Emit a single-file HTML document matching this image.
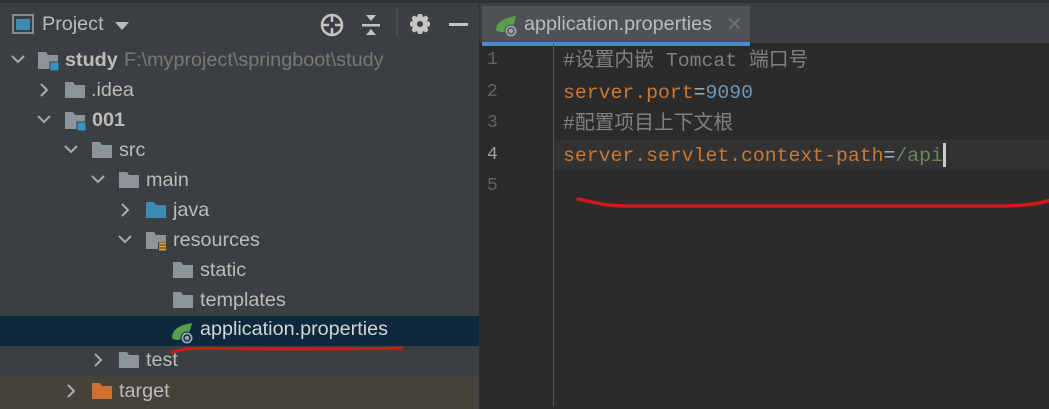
<!DOCTYPE html>
<html><head><meta charset="utf-8"><style>
*{margin:0;padding:0;box-sizing:border-box}
body{width:1049px;height:406px;overflow:hidden;background:#2b2b2b;font-family:"Liberation Sans","Noto Sans CJK SC",sans-serif;position:relative}
#left{position:absolute;left:0;top:0;width:479px;height:406px;background:#3c3f41;border-top:3px solid #2f3133}
.row{position:absolute;left:0;width:479px;height:30px;color:#bbbbbb;font-size:19.8px;line-height:30px;white-space:nowrap}
.row svg{position:absolute}
.t{position:absolute;top:0}
#right{position:absolute;left:479px;top:0;width:570px;height:406px;background:#2b2b2b}
#tabbar{position:absolute;left:0;top:0;width:570px;height:43px;background:#3c3f41;border-top:3px solid #2f3133;border-left:1px solid #323232}
#tab{position:absolute;left:2px;top:3px;width:268px;height:40px;background:#4e5254;border-bottom:4px solid #4a88c7}
.ln{position:absolute;left:8px;width:30px;text-align:left;font-family:"Liberation Mono",monospace;font-size:18px;color:#606366}
.code{position:absolute;left:84px;font-family:"Liberation Mono","Noto Sans CJK SC",monospace;font-size:19.8px;white-space:pre;line-height:30px}
.o{color:#cc7832}.b{color:#6897bb}.g{color:#808080}.gr{color:#6a8759}.w{color:#a9b7c6}
</style></head><body>
<div id="left">
 <div class="row" style="top:6px">
  <svg style="left:12px;top:5px" width="22" height="20"><rect x="1" y="1" width="20" height="18" fill="#3c3f41" stroke="#8a8d90" stroke-width="2"/><rect x="4" y="5" width="14" height="11" fill="#3d8bb0"/></svg>
  <span class="t" style="left:42px">Project</span>
  <svg style="left:114px;top:12px" width="16" height="10"><path d="M1 1 L15 1 L8 9Z" fill="#bbb"/></svg>
  <svg style="left:320px;top:4px" width="24" height="24" fill="none" stroke="#c4c4c4" stroke-width="2.5"><circle cx="12" cy="12" r="10"/><path d="M12 2v7M12 15v7M2 12h7M15 12h7"/></svg>
  <svg style="left:361px;top:5px" width="20" height="22" fill="#c4c4c4"><rect x="1" y="10" width="18" height="2.5"/><path d="M5 1h10l-5 6z M5 21h10l-5-6z"/></svg>
  <div style="position:absolute;left:396px;top:-2px;width:2px;height:30px;background:#4b4e50"></div>
  <svg style="left:409px;top:4px" width="22" height="22" fill="#c4c4c4"><path d="M9 1h4l1 3 3-1.5 2.5 2.5L18 8l3 1v4l-3 1 1.5 3-2.5 2.5L14 18l-1 3H9l-1-3-3 1.5L2.5 17 4 14l-3-1V9l3-1-1.5-3L5 2.5 8 4z"/><circle cx="11" cy="11" r="3" fill="#3c3f41"/></svg>
  <div style="position:absolute;left:449px;top:14px;width:19px;height:3px;background:#c4c4c4"></div>
 </div>
 <div class="row" style="top:42px">
  <svg style="left:11px;top:10px" width="14" height="10"><path d="M1 1l6 6 6-6" fill="none" stroke="#aaa" stroke-width="2"/></svg>
  <svg style="left:37px;top:5px" width="24" height="22"><path d="M1 2h8l2 3h10v14H1z" fill="#8c9399"/><rect x="13" y="12" width="9" height="9" fill="#3592c4" stroke="#3c3f41" stroke-width="1"/></svg>
  <span class="t" style="left:65px;font-weight:bold">study</span>
  <span class="t" style="left:124px;color:#787878">F:\myproject\springboot\study</span>
 </div>
 <div class="row" style="top:72px">
  <svg style="left:39px;top:8px" width="10" height="14"><path d="M2 1l6 6-6 6" fill="none" stroke="#aaa" stroke-width="2"/></svg>
  <svg style="left:64px;top:6px" width="22" height="18"><path d="M1 1h8l2 3h10v13H1z" fill="#8c9399"/></svg>
  <span class="t" style="left:91px">.idea</span>
 </div>
 <div class="row" style="top:102px">
  <svg style="left:37px;top:10px" width="14" height="10"><path d="M1 1l6 6 6-6" fill="none" stroke="#aaa" stroke-width="2"/></svg>
  <svg style="left:64px;top:5px" width="24" height="22"><path d="M1 2h8l2 3h10v14H1z" fill="#8c9399"/><rect x="13" y="12" width="9" height="9" fill="#3592c4" stroke="#3c3f41" stroke-width="1"/></svg>
  <span class="t" style="left:92px;font-weight:bold">001</span>
 </div>
 <div class="row" style="top:132px">
  <svg style="left:64px;top:10px" width="14" height="10"><path d="M1 1l6 6 6-6" fill="none" stroke="#aaa" stroke-width="2"/></svg>
  <svg style="left:91px;top:6px" width="22" height="18"><path d="M1 1h8l2 3h10v13H1z" fill="#8c9399"/></svg>
  <span class="t" style="left:119px">src</span>
 </div>
 <div class="row" style="top:162px">
  <svg style="left:91px;top:10px" width="14" height="10"><path d="M1 1l6 6 6-6" fill="none" stroke="#aaa" stroke-width="2"/></svg>
  <svg style="left:118px;top:6px" width="22" height="18"><path d="M1 1h8l2 3h10v13H1z" fill="#8c9399"/></svg>
  <span class="t" style="left:146px">main</span>
 </div>
 <div class="row" style="top:192px">
  <svg style="left:120px;top:8px" width="10" height="14"><path d="M2 1l6 6-6 6" fill="none" stroke="#aaa" stroke-width="2"/></svg>
  <svg style="left:145px;top:6px" width="22" height="18"><path d="M1 1h8l2 3h10v13H1z" fill="#3d8bb0"/></svg>
  <span class="t" style="left:173px">java</span>
 </div>
 <div class="row" style="top:222px">
  <svg style="left:118px;top:10px" width="14" height="10"><path d="M1 1l6 6 6-6" fill="none" stroke="#aaa" stroke-width="2"/></svg>
  <svg style="left:145px;top:5px" width="24" height="22"><path d="M1 2h8l2 3h10v14H1z" fill="#8c9399"/><rect x="13" y="12" width="9" height="10" fill="#3c3f41"/><path d="M14 13.5h7M14 16.5h7M14 19.5h7" stroke="#e0a030" stroke-width="2"/></svg>
  <span class="t" style="left:173px">resources</span>
 </div>
 <div class="row" style="top:252px">
  <svg style="left:172px;top:6px" width="22" height="18"><path d="M1 1h8l2 3h10v13H1z" fill="#8c9399"/></svg>
  <span class="t" style="left:200px">static</span>
 </div>
 <div class="row" style="top:282px">
  <svg style="left:172px;top:6px" width="22" height="18"><path d="M1 1h8l2 3h10v13H1z" fill="#8c9399"/></svg>
  <span class="t" style="left:200px">templates</span>
 </div>
 <div class="row" style="top:313px;background:#0d293e">
  <svg style="left:170px;top:5px" width="26" height="24"><path d="M2 17C2 8 10 4 22 2 20 12 16 18 8 19 5 19 3 18 2 17z" fill="#5a9e4b"/><circle cx="17" cy="17" r="6" fill="#9aa7b0" stroke="#0d293e" stroke-width="1"/><circle cx="17" cy="17" r="3" fill="none" stroke="#0d293e" stroke-width="1.5"/></svg>
  <span class="t" style="left:200px;top:-2px;color:#d4d4d4">application.properties</span>
 </div>
 <div class="row" style="top:342px">
  <svg style="left:93px;top:8px" width="10" height="14"><path d="M2 1l6 6-6 6" fill="none" stroke="#aaa" stroke-width="2"/></svg>
  <svg style="left:118px;top:6px" width="22" height="18"><path d="M1 1h8l2 3h10v13H1z" fill="#8c9399"/></svg>
  <span class="t" style="left:146px">test</span>
 </div>
 <div class="row" style="top:373px;height:33px;background:#45423b">
  <svg style="left:66px;top:8px" width="10" height="14"><path d="M2 1l6 6-6 6" fill="none" stroke="#aaa" stroke-width="2"/></svg>
  <svg style="left:91px;top:6px" width="22" height="18"><path d="M1 1h8l2 3h10v13H1z" fill="#d0702e"/></svg>
  <span class="t" style="left:119px">target</span>
 </div>
 <svg style="position:absolute;left:0;top:0" width="479" height="406"><path d="M172 349 C190 344 200 345 260 346 C320 346 360 346 402 345" fill="none" stroke="#d01818" stroke-width="3" stroke-linecap="round"/></svg>
</div>
<div id="right">
 <div id="tabbar">
  <div id="tab">
   <svg style="position:absolute;left:12px;top:9px" width="26" height="24"><path d="M2 15C2 7 10 3 22 1 20 11 16 16 8 17 5 17 3 16 2 15z" fill="#5a9e4b"/><circle cx="17" cy="16" r="6" fill="#9aa7b0" stroke="#4e5254" stroke-width="1"/><circle cx="17" cy="16" r="3" fill="none" stroke="#4e5254" stroke-width="1.5"/></svg>
   <span style="position:absolute;left:42px;top:7px;font-size:19.8px;color:#bbbbbb">application.properties</span>
   <span style="position:absolute;left:244px;top:6px;font-size:20px;color:#6e7072">✕</span>
  </div>
 </div>
 <div style="position:absolute;left:74px;top:43px;width:1px;height:363px;background:#555"></div>
 <div style="position:absolute;left:75px;top:140px;width:495px;height:30px;background:#323232"></div>
 <div class="ln" style="top:50px">1</div>
 <div class="ln" style="top:82px">2</div>
 <div class="ln" style="top:113px">3</div>
 <div class="ln" style="top:145px;color:#a4a3a3">4</div>
 <div class="ln" style="top:176px">5</div>
 <div class="code g" style="top:46px">#设置内嵌 Tomcat 端口号</div>
 <div class="code" style="top:78px"><span class="o">server.port</span><span class="w">=</span><span class="b">9090</span></div>
 <div class="code g" style="top:109px">#配置项目上下文根</div>
 <div class="code" style="top:141px"><span class="o">server.servlet.context-path</span><span class="w">=</span><span class="gr">/api</span></div>
 <div style="position:absolute;left:464px;top:143px;width:3px;height:24px;background:#ccc"></div>
 <svg style="position:absolute;left:0;top:0" width="570" height="406"><path d="M99 199 C115 202 125 206 145 206 L520 206 C545 206 560 204 572 200" fill="none" stroke="#d01818" stroke-width="3.5" stroke-linecap="round"/></svg>
</div>
</body></html>
